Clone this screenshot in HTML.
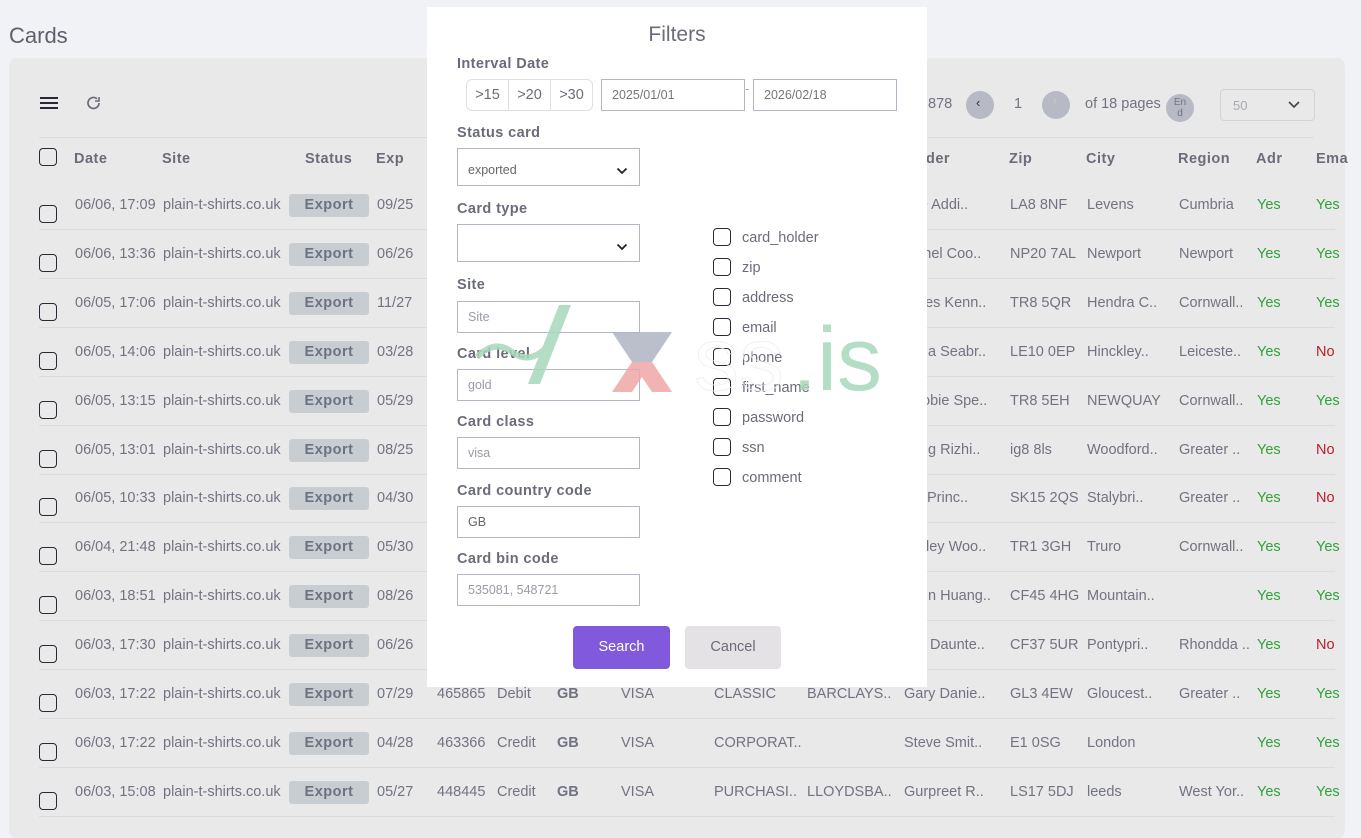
<!DOCTYPE html>
<html><head><meta charset="utf-8">
<style>
*{box-sizing:border-box;margin:0;padding:0}
body{width:1361px;height:820px;overflow:hidden;background:#f1f2f6;font-family:"Liberation Sans",sans-serif;position:relative;color:#6b6c7a}
.abs{position:absolute;white-space:nowrap}
.card{position:absolute;left:9px;top:58px;width:1336px;height:780px;background:#e9e9e9;border-radius:8px}
.cb{position:absolute;width:18px;height:18px;border:1.5px solid #2a2838;border-radius:4px;background:transparent}
.th{position:absolute;font-weight:bold;font-size:14.5px;color:#6b6c7a;letter-spacing:.5px}
.td{position:absolute;font-size:14.5px;color:#727382;white-space:nowrap}
.badge{position:absolute;width:80px;height:23px;background:#c8cdd2;border-radius:3px;font-weight:bold;font-size:14.5px;color:#6e7280;text-align:center;line-height:23px;letter-spacing:.5px}
.line{position:absolute;left:39px;width:1296px;height:1px;background:#dcdcdc}
.yes{color:#2fa23a}.no{color:#b8202a}
.modal{position:absolute;left:427px;top:7px;width:500px;height:680px;background:#fff}
.lbl{position:absolute;left:30px;font-weight:bold;font-size:14.5px;color:#6b6c7a;letter-spacing:.4px}
.inp{position:absolute;left:30px;width:183px;height:32px;border:1px solid #b3b6c4;font-size:12.5px;color:#9a9ba6;padding-left:10px;line-height:30px}
.opt{position:absolute;left:286px;font-size:14.5px;color:#6b6c7a}
.opt .cb{left:0;top:0}
.opt span{position:absolute;left:29px;top:2px;white-space:nowrap}
.circ{position:absolute;width:28px;height:28px;border-radius:50%;background:#b7b9c4}
</style></head><body>
<div class="abs" style="left:9px;top:23px;font-size:22px;color:#5f606d">Cards</div>
<div class="card"></div>
<svg class="abs" style="left:39px;top:95px" width="20" height="16"><path d="M1 3h18M1 8h18M1 13h18" stroke="#2a2838" stroke-width="2"/></svg>
<svg class="abs" style="left:85px;top:94px" width="18" height="18" viewBox="0 0 18 18"><path d="M14 9a5.5 5.5 0 1 1-2-4.3" fill="none" stroke="#6b6c7a" stroke-width="1.7"/><path d="M14 3v4h-4" fill="none" stroke="#6b6c7a" stroke-width="1.6"/></svg>
<div class="td" style="left:928px;top:96px">878</div>
<div class="circ" style="left:966px;top:91px"></div><div class="td" style="left:976px;top:95px;font-size:13px;color:#333">‹</div>
<div class="td" style="left:1014px;top:96px">1</div>
<div class="circ" style="left:1042px;top:91px"></div><div class="td" style="left:1053px;top:95px;font-size:11px;color:#ccc">›</div>
<div class="td" style="left:1085px;top:96px">of 18 pages</div>
<div class="circ" style="left:1166px;top:94px"></div><div class="td" style="left:1172px;top:97px;font-size:10px;line-height:11px;text-align:center;width:16px;white-space:normal">En d</div>
<div class="abs" style="left:1220px;top:89px;width:95px;height:32px;border:1px solid #d2d4da;border-radius:4px;font-size:13px;color:#a8a9b2;padding:8px 12px">50</div>
<svg class="abs" style="left:1287px;top:100px" width="14" height="10"><path d="M2 2l5 5 5-5" fill="none" stroke="#444" stroke-width="1.6"/></svg>
<div class="line" style="top:137px;width:1275px"></div>
<div class="cb" style="left:39px;top:148px"></div>
<div class="th" style="left:74px;top:151px">Date</div>
<div class="th" style="left:162px;top:151px">Site</div>
<div class="th" style="left:305px;top:151px">Status</div>
<div class="th" style="left:376px;top:151px">Exp</div>
<div class="th" style="left:926px;top:151px">der</div>
<div class="th" style="left:1009px;top:151px">Zip</div>
<div class="th" style="left:1086px;top:151px">City</div>
<div class="th" style="left:1178px;top:151px">Region</div>
<div class="th" style="left:1256px;top:151px">Adr</div>
<div class="th" style="left:1316px;top:151px">Ema</div>
<div id="rows"></div>
<script>
var d=[
["06/06, 17:09","09/25","","","","","","re Addi..","LA8 8NF","Levens","Cumbria","Yes","Yes",915],
["06/06, 13:36","06/26","","","","","","chel Coo..","NP20 7AL","Newport","Newport","Yes","Yes",916],
["06/05, 17:06","11/27","","","","","","nes Kenn..","TR8 5QR","Hendra C..","Cornwall..","Yes","Yes",917],
["06/05, 14:06","03/28","","","","","","a Seabr..","LE10 0EP","Hinckley..","Leiceste..","Yes","No",928],
["06/05, 13:15","05/29","","","","","","obie Spe..","TR8 5EH","NEWQUAY","Cornwall..","Yes","Yes",922],
["06/05, 13:01","08/25","","","","","","g Rizhi..","ig8 8ls","Woodford..","Greater ..","Yes","No",928],
["06/05, 10:33","04/30","","","","","","Princ..","SK15 2QS","Stalybri..","Greater ..","Yes","No",927],
["06/04, 21:48","05/30","","","","","","ley Woo..","TR1 3GH","Truro","Cornwall..","Yes","Yes",926],
["06/03, 18:51","08/26","","","","","","n Huang..","CF45 4HG","Mountain..","","Yes","Yes",928],
["06/03, 17:30","06/26","","","","","","Daunte..","CF37 5UR","Pontypri..","Rhondda ..","Yes","No",930],
["06/03, 17:22","07/29","465865","Debit","GB","VISA","CLASSIC","BARCLAYS..","Gary Danie..","GL3 4EW","Gloucest..","Greater ..","Yes","Yes"],
["06/03, 17:22","04/28","463366","Credit","GB","VISA","CORPORAT..","","Steve Smit..","E1 0SG","London","","Yes","Yes"],
["06/03, 15:08","05/27","448445","Credit","GB","VISA","PURCHASI..","LLOYDSBA..","Gurpreet R..","LS17 5DJ","leeds","West Yor..","Yes","Yes"]];
var h="";
d.forEach(function(r,i){
 var y=197+i*48.9, cy=Math.round(y);
 h+='<div class="cb" style="left:39px;top:'+(cy+8)+'px"></div>';
 h+='<div class="td" style="left:75px;top:'+cy+'px">'+r[0]+'</div>';
 h+='<div class="td" style="left:163px;top:'+cy+'px">plain-t-shirts.co.uk</div>';
 h+='<div class="badge" style="left:289px;top:'+(cy-3)+'px">Export</div>';
 h+='<div class="td" style="left:377px;top:'+cy+'px">'+r[1]+'</div>';
 var z,c,rg,a,e;
 if(i<10){z=r[8];c=r[9];rg=r[10];a=r[11];e=r[12];
  h+='<div class="td" style="left:'+r[13]+'px;top:'+cy+'px">'+r[7]+'</div>';}
 else{
  h+='<div class="td" style="left:437px;top:'+cy+'px">'+r[2]+'</div>';
  h+='<div class="td" style="left:497px;top:'+cy+'px">'+r[3]+'</div>';
  h+='<div class="td" style="left:557px;top:'+cy+'px;font-weight:bold">'+r[4]+'</div>';
  h+='<div class="td" style="left:621px;top:'+cy+'px">'+r[5]+'</div>';
  h+='<div class="td" style="left:714px;top:'+cy+'px">'+r[6]+'</div>';
  h+='<div class="td" style="left:807px;top:'+cy+'px">'+r[7]+'</div>';
  h+='<div class="td" style="left:904px;top:'+cy+'px">'+r[8]+'</div>';
  z=r[9];c=r[10];rg=r[11];a=r[12];e=r[13];}
 h+='<div class="td" style="left:1010px;top:'+cy+'px">'+z+'</div>';
 h+='<div class="td" style="left:1087px;top:'+cy+'px">'+c+'</div>';
 h+='<div class="td" style="left:1179px;top:'+cy+'px">'+rg+'</div>';
 h+='<div class="td '+(a=="Yes"?"yes":"no")+'" style="left:1257px;top:'+cy+'px">'+a+'</div>';
 h+='<div class="td '+(e=="Yes"?"yes":"no")+'" style="left:1316px;top:'+cy+'px">'+e+'</div>';
 h+='<div class="line" style="top:'+Math.round(y+32)+'px"></div>';
});
document.getElementById("rows").innerHTML=h;
</script>
<div class="modal">
 <div class="abs" style="left:0;width:500px;text-align:center;top:16px;font-size:21px;color:#6b6c7a">Filters</div>
 <div class="lbl" style="top:49px">Interval Date</div>
 <div class="abs" style="left:39px;top:72px;width:127px;height:32px;border:1px solid #dfe0e4;border-radius:6px;font-size:14.5px;color:#6b6c7a;display:flex">
  <div style="flex:1;text-align:center;line-height:30px;border-right:1px solid #dfe0e4">&gt;15</div>
  <div style="flex:1;text-align:center;line-height:30px;border-right:1px solid #dfe0e4">&gt;20</div>
  <div style="flex:1;text-align:center;line-height:30px">&gt;30</div></div>
 <div class="inp" style="left:174px;top:72px;width:144px;color:#777">2025/01/01</div>
 <div class="abs" style="left:318px;top:74px;color:#aaa;font-size:13px">-</div>
 <div class="inp" style="left:326px;top:72px;width:144px;color:#777">2026/02/18</div>
 <div class="lbl" style="top:118px">Status card</div>
 <div class="inp" style="top:141px;height:38px;line-height:42px;color:#666">exported</div>
 <svg class="abs" style="left:189px;top:160px" width="12" height="8"><path d="M1.5 1.5l4.5 4.5 4.5-4.5" fill="none" stroke="#222" stroke-width="1.8"/></svg>
 <div class="lbl" style="top:194px">Card type</div>
 <div class="inp" style="top:217px;height:38px"></div>
 <svg class="abs" style="left:189px;top:236px" width="12" height="8"><path d="M1.5 1.5l4.5 4.5 4.5-4.5" fill="none" stroke="#222" stroke-width="1.8"/></svg>
 <div class="lbl" style="top:270px">Site</div>
 <div class="inp" style="top:294px">Site</div>
 <div class="lbl" style="top:339px">Card level</div>
 <div class="inp" style="top:362px">gold</div>
 <div class="lbl" style="top:407px">Card class</div>
 <div class="inp" style="top:430px">visa</div>
 <div class="lbl" style="top:476px">Card country code</div>
 <div class="inp" style="top:499px;color:#666">GB</div>
 <div class="lbl" style="top:544px">Card bin code</div>
 <div class="inp" style="top:567px">535081, 548721</div>
 <div class="abs" style="left:146px;top:619px;width:97px;height:43px;background:#8159dd;border-radius:4px;color:#fff;font-size:14.5px;text-align:center;line-height:43px">Search</div>
 <div class="abs" style="left:258px;top:619px;width:96px;height:43px;background:#e4e2e4;border-radius:4px;color:#6b6c7a;font-size:14.5px;text-align:center;line-height:43px">Cancel</div>
 <div class="opt" style="top:221px"><div class="cb"></div><span>card_holder</span></div>
 <div class="opt" style="top:251px"><div class="cb"></div><span>zip</span></div>
 <div class="opt" style="top:281px"><div class="cb"></div><span>address</span></div>
 <div class="opt" style="top:311px"><div class="cb"></div><span>email</span></div>
 <div class="opt" style="top:341px"><div class="cb"></div><span>phone</span></div>
 <div class="opt" style="top:371px"><div class="cb"></div><span>first_name</span></div>
 <div class="opt" style="top:401px"><div class="cb"></div><span>password</span></div>
 <div class="opt" style="top:431px"><div class="cb"></div><span>ssn</span></div>
 <div class="opt" style="top:461px"><div class="cb"></div><span>comment</span></div>
 <svg class="abs" style="left:45px;top:295px;opacity:.85" width="420" height="100">
  <path d="M5 55q18-18 35-5t35-5" fill="none" stroke="#a8d8bb" stroke-width="6"/>
  <path d="M56 82L87 3h12L68 82z" fill="#a8d8bb"/>
  <path d="M140 30h60l-20 30h-20z" fill="#b0b3c2"/>
  <path d="M160 60h20l20 30h-20l-10-15-10 15h-20z" fill="#f0a6a6"/>
  <text x="222" y="88" font-family="Liberation Sans" font-size="90" fill="none" stroke="#eee" stroke-width="1">ss</text>
  <text x="320" y="88" font-family="Liberation Sans" font-size="90" fill="#a8d8bb">.is</text>
 </svg>
</div>
</body></html>
